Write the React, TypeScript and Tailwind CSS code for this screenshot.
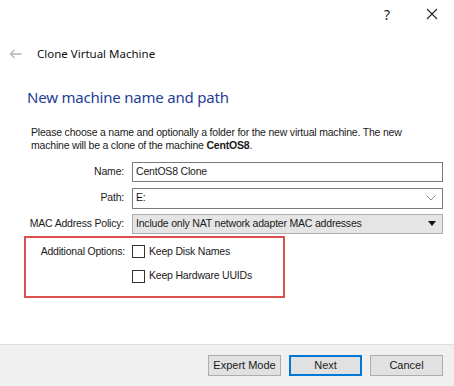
import React from 'react';

const body = { fontFamily: '"Liberation Sans", Arial, sans-serif' };
const ui = { fontFamily: '"Noto Sans", "Open Sans", sans-serif' };

// Small square checkbox used in the options group
const Check = ({ label }: { label: string }) => (
  <label className="flex items-center gap-[4px] text-[10.5px] tracking-[-0.2px] text-[#1a1a1a]">
    <span className="h-[13px] w-[13px] border border-[#333] bg-white" />
    <span>{label}</span>
  </label>
);

export default function App() {
  return (
    <div className="flex h-[386px] w-[454px] flex-col bg-white text-[#1a1a1a]" style={body}>
      {/* window caption */}
      <div className="flex h-[28px] items-center justify-end pr-[16px] text-[#222]" style={ui}>
        <span className="mr-[36px] text-[14px]">?</span>
        <svg width="12" height="12" viewBox="0 0 12 12" stroke="#222" strokeWidth="1.1">
          <path d="M1 1 L11 11 M11 1 L1 11" />
        </svg>
      </div>

      {/* back + wizard title */}
      <div className="mt-[14px] flex h-[24px] items-center pl-[9px]" style={ui}>
        <svg width="13" height="10" viewBox="0 0 13 10" stroke="#b5b5b5" strokeWidth="1.3" fill="none">
          <path d="M12.5 5 H1.5 M5.5 1 L1.5 5 L5.5 9" />
        </svg>
        <span className="ml-[15px] text-[11.5px] text-[#111]">Clone Virtual Machine</span>
      </div>

      <div className="mt-[20px] pl-[27px] text-[15px] tracking-[-0.2px] text-[#1f3d96]" style={ui}>
        New machine name and path
      </div>

      <p className="mt-[17px] whitespace-nowrap pl-[31px] text-[10.5px] leading-[13px] tracking-[-0.2px]">
        Please choose a name and optionally a folder for the new virtual machine. The new
        <br />
        machine will be a clone of the machine <b>CentOS8</b>.
      </p>

      <div className="mt-[10px] grid grid-cols-[125px_1fr] items-center gap-y-[6px] pr-[11px] text-[10.5px] tracking-[-0.2px]">
        <span className="pr-[1px] text-right">Name:</span>
        <div className="ml-[7px] flex h-[20px] items-center border border-[#7a7a7a] pl-[3px]">CentOS8 Clone</div>

        <span className="pr-[1px] text-right">Path:</span>
        <div className="ml-[7px] flex h-[21px] items-center justify-between border border-[#7a7a7a] pl-[3px] pr-[6px]">
          <span>E:</span>
          <svg width="10" height="6" viewBox="0 0 10 6" stroke="#8a8a8a" fill="none" strokeWidth="1">
            <path d="M0.5 0.5 L5 5 L9.5 0.5" />
          </svg>
        </div>

        <span className="pr-[1px] text-right">MAC Address Policy:</span>
        <div className="-mt-[1px] ml-[7px] flex h-[20px] items-center justify-between border border-[#adadad] bg-[#e5e5e5] pl-[3px] pr-[6px]">
          <span>Include only NAT network adapter MAC addresses</span>
          <svg width="8" height="5" viewBox="0 0 8 5">
            <path d="M0 0 H8 L4 5 Z" fill="#111" />
          </svg>
        </div>
      </div>

      <div className="ml-[24px] mt-[2px] h-[62px] w-[261px] border-2 border-[#d9504d] pt-[6px]">
        <div className="grid grid-cols-[99px_1fr] gap-y-[9px] text-[10.5px] tracking-[-0.2px]">
          <span className="self-center text-right">Additional Options:</span>
          <div className="ml-[7px]">
            <Check label="Keep Disk Names" />
          </div>
          <span />
          <div className="ml-[7px]">
            <Check label="Keep Hardware UUIDs" />
          </div>
        </div>
      </div>

      <div className="mt-auto flex h-[42px] items-center justify-end gap-[8px] border-t border-[#dfdfdf] bg-[#f0f0f0] pr-[11px] text-[11px]">
        <button className="h-[21px] w-[73px] border border-[#adadad] bg-[#e1e1e1]">Expert Mode</button>
        <button className="h-[21px] w-[73px] border-2 border-[#0078d7] bg-[#e1e1e1]">Next</button>
        <button className="h-[21px] w-[73px] border border-[#adadad] bg-[#e1e1e1]">Cancel</button>
      </div>
    </div>
  );
}
